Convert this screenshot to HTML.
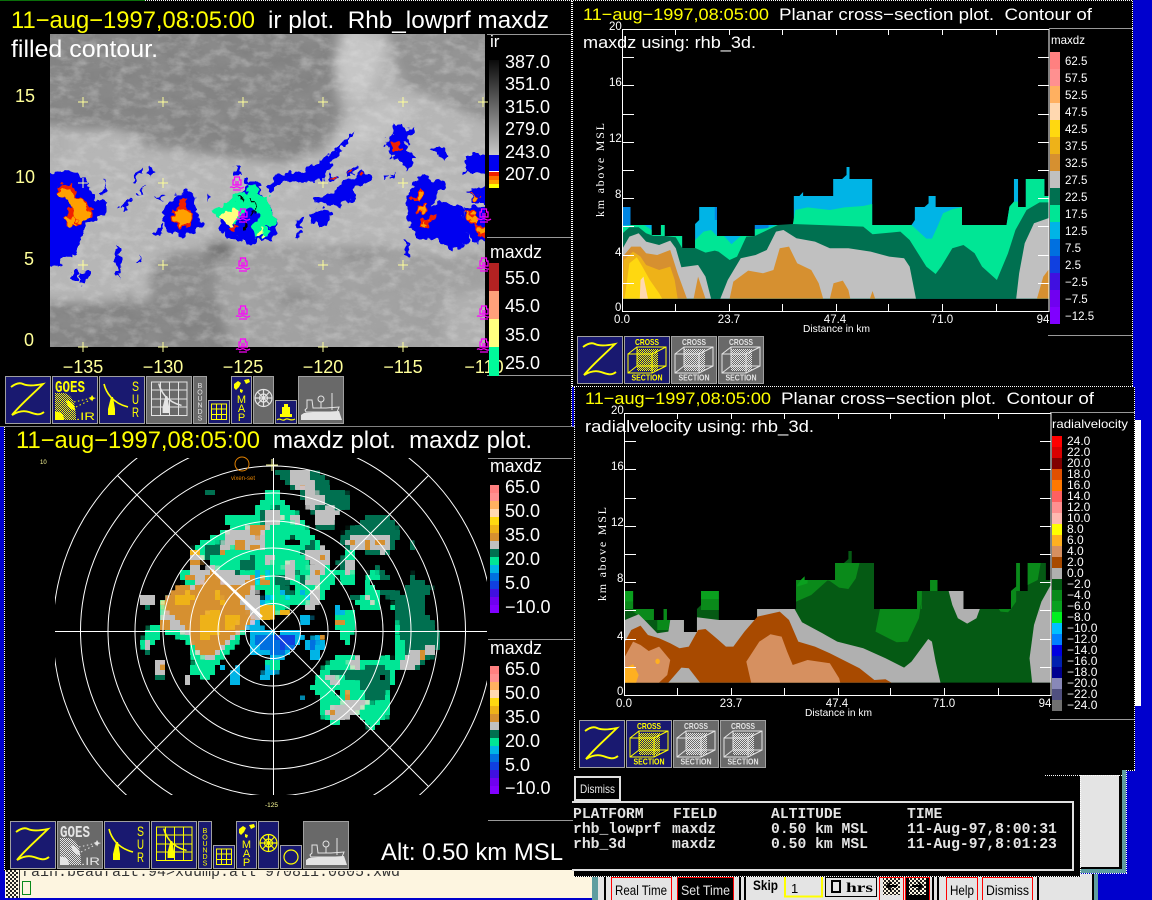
<!DOCTYPE html>
<html><head><meta charset="utf-8"><title>maxdz plots</title>
<style>
html,body{margin:0;padding:0;background:#0000cd;width:1152px;height:900px;overflow:hidden}
svg{display:block;font-family:"Liberation Sans",sans-serif}
.y{fill:#ffff00}.w{fill:#fff}.c{fill:#ffff99}
.m{font-family:"Liberation Mono",monospace;font-size:14.7px;fill:#e4e4e4;font-weight:bold}
</style></head><body>
<svg width="1152" height="900" viewBox="0 0 1152 900" xmlns="http://www.w3.org/2000/svg">
<defs>
<filter id="blur" filterUnits="userSpaceOnUse" x="0" y="0" width="560" height="400"><feGaussianBlur stdDeviation="5"/></filter>
<filter id="noise" x="0" y="0" width="100%" height="100%"><feTurbulence type="fractalNoise" baseFrequency="0.035 0.06" numOctaves="4" seed="7"/><feColorMatrix values="0 0 0 0 .45  0 0 0 0 .45  0 0 0 0 .45  1.6 0 0 0 -.35"/></filter>
<filter id="noise2" x="0" y="0" width="100%" height="100%"><feTurbulence type="fractalNoise" baseFrequency="0.07 0.12" numOctaves="4" seed="3"/><feColorMatrix values="0 0 0 0 .85  0 0 0 0 .85  0 0 0 0 .85  2.2 0 0 0 -.95"/></filter>
<filter id="rough" filterUnits="userSpaceOnUse" x="10" y="10" width="520" height="360" color-interpolation-filters="sRGB"><feTurbulence type="fractalNoise" baseFrequency="0.14" numOctaves="2" seed="5" result="t"/><feDisplacementMap in="SourceGraphic" in2="t" scale="12" xChannelSelector="R" yChannelSelector="G"/></filter>
<filter id="pix" filterUnits="userSpaceOnUse" primitiveUnits="userSpaceOnUse" x="100" y="450" width="400" height="340" color-interpolation-filters="sRGB">
<feFlood x="102" y="452" width="1" height="1" flood-color="#000"/>
<feComposite x="100" y="450" width="5" height="5"/>
<feTile result="a"/>
<feComposite in="SourceGraphic" in2="a" operator="in"/>
<feMorphology operator="dilate" radius="2"/>
</filter>
<clipPath id="irc"><rect x="50" y="34" width="435" height="313"/></clipPath>
<clipPath id="pc"><rect x="55" y="458" width="432" height="337"/></clipPath>
<clipPath id="tc"><rect x="5" y="871" width="590" height="27"/></clipPath>
<pattern id="ckW" width="2" height="2" patternUnits="userSpaceOnUse"><rect width="1" height="1" fill="#fff"/><rect x="1" y="1" width="1" height="1" fill="#fff"/></pattern>
<pattern id="ckD" width="4" height="4" patternUnits="userSpaceOnUse"><rect width="4" height="4" fill="#fdf5e0"/><rect width="2" height="2" fill="#222"/><rect x="2" y="2" width="2" height="2" fill="#222"/></pattern>
<mask id="ckm" maskUnits="userSpaceOnUse" x="0" y="0" width="50" height="50"><rect width="50" height="50" fill="url(#ckW)"/></mask>
<linearGradient id="gr" x1="0" y1="0" x2="0" y2="1"><stop offset="0" stop-color="#0a0a0a"/><stop offset="1" stop-color="#c8c8c8"/></linearGradient>

<g id="bar16" shape-rendering="crispEdges">
<rect y="0" width="1" height="1" fill="#ff8080"/><rect y="1" width="1" height="1" fill="#ff9090"/><rect y="2" width="1" height="1" fill="#ffb060"/><rect y="3" width="1" height="1" fill="#ffd8b0"/><rect y="4" width="1" height="1" fill="#ffd810"/><rect y="5" width="1" height="1" fill="#eeb218"/><rect y="6" width="1" height="1" fill="#d69030"/><rect y="7" width="1" height="1" fill="#c0c0c0"/><rect y="8" width="1" height="1" fill="#007050"/><rect y="9" width="1" height="1" fill="#00e695"/><rect y="10" width="1" height="1" fill="#00b4e6"/><rect y="11" width="1" height="1" fill="#0070e0"/><rect y="12" width="1" height="1" fill="#1040e0"/><rect y="13" width="1" height="1" fill="#4010e0"/><rect y="14" width="1" height="1" fill="#7000f0"/><rect y="15" width="1" height="1" fill="#8000ff"/>
</g>
<g id="mb" fill="none" stroke="#ff00ff" stroke-width="1.200"><path d="M-2.500-7h5v3h1.500v5h-8v-5h1.500zM-1-3v4M1-3v4"/><path d="M-7 3.500c2-2 3 1 4.500 0s3-1 4.500 0 3 1 5-.5"/><path d="M-4 6h8"/></g>

<g id="z"><path d="M6 11C10 8 14 6 18 8S28 10 38 8C28 18 16 28 7 39C12 36 18 34 24 36S34 40 39 36" fill="none" stroke="currentColor" stroke-width="1.900"/></g>
<g id="goes" fill="currentColor">
<text x="3" y="16" font-size="17" font-weight="bold" textLength="30" lengthAdjust="spacingAndGlyphs" font-family="Liberation Mono">GOES</text>
<path d="M3 17H12C20 19 24 26 24 44H3Z" mask="url(#ckm)"/>
<path d="M3 36C8 35 12 38 12 44H3ZM14 24C18 25 23 28 23 34C19 34 15 31 14 24Z"/>
<path d="M22 26L40 22M24 31L40 23" fill="none" stroke="currentColor" stroke-width="1" stroke-dasharray="1.500 2.500"/>
<path d="M40 19l1.500 2.500 2.500 .5-2.500 1-1.500 2.500-1-2.500-2.500-1 2.500-1Z"/>
<text x="24" y="44" font-size="11" textLength="19" lengthAdjust="spacingAndGlyphs">.IR</text>
</g>
<g id="radar"><path d="M5 8C7 16 13 27 29 31" fill="none" stroke="currentColor" stroke-width="1.600"/><path d="M12 21H14L16 33V39H9V33Z" fill="currentColor"/></g>
<g id="sur" fill="currentColor"><use href="#radar"/>
<text x="33" y="15" font-size="14" textLength="7" lengthAdjust="spacingAndGlyphs">S</text><text x="33" y="28" font-size="14" textLength="7" lengthAdjust="spacingAndGlyphs">U</text><text x="33" y="41" font-size="14" textLength="7" lengthAdjust="spacingAndGlyphs">R</text></g>
<g id="gsur"><path d="M5.500 6H41V39.500H5.500ZM14.500 6V39.500M23.500 6V39.500M32.500 6V39.500M5.500 14H41M5.500 23H41M5.500 31H41" fill="none" stroke="currentColor" stroke-width="1"/><g transform="translate(8,0) scale(.95)"><use href="#radar"/></g></g>
<g id="bounds" fill="currentColor" font-size="7" text-anchor="middle"><text x="7" y="12">B</text><text x="7" y="18.500">O</text><text x="7" y="25">U</text><text x="7" y="31.500">N</text><text x="7" y="38">D</text><text x="7" y="44.500">S</text></g>
<g id="sgrid"><path d="M3.500 4H18.500V19.500H3.500ZM8.500 4V19.500M13.500 4V19.500M3.500 9H18.500M3.500 14.500H18.500" fill="none" stroke="currentColor" stroke-width="1"/></g>
<g id="map" fill="currentColor"><path d="M3 8L7 5L10 7L8 11L5 14L3 12ZM13 4L18 3L19 6L15 8ZM9 13L12 14L11 17L9 16Z"/><text x="10.500" y="27" font-size="11" text-anchor="middle">M</text><text x="10.500" y="36" font-size="11" text-anchor="middle">A</text><text x="10.500" y="45" font-size="11" text-anchor="middle">P</text></g>
<g id="wheel" fill="none" stroke="currentColor" stroke-width="1.200"><circle cx="10.500" cy="22" r="8.500"/><circle cx="10.500" cy="22" r="4"/><path d="M10.500 13V31M2 22H19M4.500 16L16.500 28M16.500 16L4.500 28"/></g>
<g id="buoy"><path d="M9 4H13V7H15V14H17V17H5V14H7V7H9Z" fill="currentColor"/><path d="M2 20C5 17 7 22 10 19.500C13 17 15 22 20 19" fill="none" stroke="currentColor" stroke-width="1.200"/></g>
<g id="circ"><circle cx="11" cy="12" r="7" fill="none" stroke="currentColor" stroke-width="1.200"/></g>
<g id="ship" fill="currentColor"><path d="M3 44V39L6 37L41 35L44 44Z"/><path d="M7 34L8 36H39L41 31L28 32H15L14 24H9V32Z" fill="none" stroke="currentColor" stroke-width="1"/><circle cx="23" cy="23" r="3" fill="none" stroke="currentColor" stroke-width="1"/><path d="M23 26V32M34 17V34" fill="none" stroke="currentColor" stroke-width="1"/></g>
<g id="cross"><text x="23" y="9" font-size="8.500" text-anchor="middle" font-weight="bold" fill="currentColor" textLength="24" lengthAdjust="spacingAndGlyphs">CROSS</text>
<text x="23" y="44.500" font-size="8.500" text-anchor="middle" font-weight="bold" fill="currentColor" textLength="31" lengthAdjust="spacingAndGlyphs">SECTION</text>
<rect x="13" y="13" width="21" height="22" fill="currentColor" mask="url(#ckm)"/>
<path d="M4 18H28V37H4ZM13 11H42V30H13ZM4 18L13 11M28 18L42 11M28 37L42 30M4 37L13 30M13 11V30M28 18V37" fill="none" stroke="currentColor" stroke-width="1"/></g>
</defs>

<!-- base -->
<rect width="1152" height="900" fill="#0000cd"/>
<rect x="0" y="0" width="572" height="427" fill="#000"/>
<rect x="4" y="427" width="570" height="444" fill="#000"/>
<rect x="572" y="0" width="561" height="387" fill="#000"/>
<rect x="574" y="387" width="561" height="384" fill="#000"/>
<rect x="1135" y="420" width="6" height="286" fill="#fff"/>
<path d="M0 .5H145" stroke="#0a6e0a" stroke-width="1"/>
<path d="M145 .5H1133" stroke="#fff" stroke-dasharray="1 1" stroke-width="1"/>

<!-- IR PANEL -->
<g clip-path="url(#irc)">
<rect x="50" y="34" width="435" height="313" fill="#8a8a8a"/>
<g filter="url(#blur)"><g transform="translate(50,34) scale(.3333)">
<path d="M-50 -50H850V280L830 340L700 380L500 350L400 345L300 340L200 280L-50 270Z" fill="#828282"/>
<path d="M-50 270L100 290L200 285L290 340L400 350L520 370L700 385L830 340L880 250L850 100L880 -50H1000L1050 150L1150 190L1350 280V640L1200 680L1000 640L700 640L560 640L350 660L200 800L-50 810Z" fill="#b6b6b6"/>
<path d="M1000 -50H1350V270L1150 180L1050 140Z" fill="#909090"/>
<path d="M860 80L900 -20L1000 30L980 120L930 220L880 150Z" fill="#c8c8c8"/>
<path d="M830 330L900 250L1000 200L1100 210L1060 280L980 320L900 370Z" fill="#c2c2c2"/>
<path d="M500 650L1000 650L1200 690L1350 650V990H500Z" fill="#a0a0a0"/>
<path d="M-50 800L200 810L500 780L560 990H-50Z" fill="#828282"/>
<path d="M1180 800L1350 750V990H1190Z" fill="#b0b0b0"/>
<ellipse cx="510" cy="645" rx="45" ry="25" fill="#6c6c6c"/><ellipse cx="740" cy="790" rx="60" ry="25" fill="#8c8c8c"/><ellipse cx="920" cy="660" rx="50" ry="20" fill="#8e8e8e"/>
<path d="M210 290L270 300L300 360L260 350ZM-50 280L50 285L60 370H-50Z" fill="#b0b0b0"/>
<path d="M230 640H300V800L240 800Z" fill="#b8b8b8"/>
</g></g>
<rect x="50" y="34" width="435" height="313" filter="url(#noise)" opacity=".2"/>
<rect x="50" y="34" width="435" height="313" filter="url(#noise2)" opacity=".3"/>
<g filter="url(#rough)"><g transform="translate(50,34) scale(.3333)">
<g fill="#0000f0">
<path d="M-60 430L50 410L110 430L130 490L170 510L165 545L105 575L100 610L75 650L70 670L40 670L30 700H-60Z"/>
<path d="M60 715L85 710L85 740L60 738ZM90 715L120 710L105 750L90 745ZM210 520L240 490L250 490L225 525L215 530ZM240 440L275 405L280 420L245 445ZM150 480L165 440L170 470L160 490ZM290 420L300 395L315 410L300 430ZM260 480L290 450L275 480ZM198 630L215 640L210 740L200 700ZM258 690L270 665L272 680L262 695Z"/>
<path d="M340 530L370 490L405 470L435 480L440 530L452 570L435 595L400 608L360 595L335 560ZM315 490L345 483L335 500ZM315 600L335 575L340 600L330 612ZM470 480L482 490L475 505Z"/>
<path d="M505 575L520 540L560 490L610 440L630 470L650 500L680 550L672 625L640 615L600 635L560 610L520 605L505 590ZM585 435L620 435L635 460L600 470Z"/>
<path d="M650 470L680 420L750 415L790 395L830 370L860 340L890 310L860 370L830 405L820 440L760 445L690 445L660 480ZM875 330L910 285L890 330Z"/>
<path d="M790 495L860 470L880 440L920 430L935 410L970 430L955 445L920 455L915 490L870 515L800 510ZM785 540L820 520L846 540L835 570L805 578L785 560ZM838 418L860 425V440H840ZM890 405L915 395V420H895Z"/>
<path d="M740 560L758 555L755 585L742 580ZM738 595L748 590V618L738 612ZM990 420H1015L1005 435ZM1020 418L1040 420L1025 435ZM1065 625L1075 620L1078 660L1065 665ZM550 400H570L565 420Z"/>
<path d="M1010 310L1030 300V265L1055 275L1060 285L1095 280L1070 320V350L1098 365L1070 415L1060 380L1020 365L1005 335ZM1135 345L1180 335L1195 360L1180 385L1160 355Z"/>
<path d="M1070 500L1090 450L1120 415L1145 440H1190L1165 490L1150 510L1215 505L1240 530L1260 620L1205 652L1180 640L1160 610H1105L1075 570Z"/>
<path d="M1240 520H1380V625H1270L1250 590ZM1245 370L1280 355L1380 375V420H1245ZM1255 470L1380 440V510H1270Z"/>
</g>
<g fill="#f02000">
<path d="M25 455L70 450L85 490L120 515L130 545L100 555L75 580L50 570V540L70 510L45 490L25 480Z"/>
<path d="M365 530L385 520L390 490L415 495L410 520L430 540L420 565L395 590L365 560Z"/>
<path d="M1015 325L1050 315L1055 350L1030 352Z"/>
<path d="M1085 495L1115 460L1122 485L1105 505ZM1100 515L1130 505L1125 535L1100 540ZM1110 560L1160 540L1135 585L1110 575ZM1240 535L1265 530L1285 555L1280 575L1265 570ZM1275 575L1380 565V610H1285ZM1258 470L1285 485L1275 505ZM845 425H858V437H845ZM897 405H907V415H897ZM935 418H945V424H935ZM535 585L555 565V590Z"/>
</g>
<g fill="#ffa000">
<path d="M30 465L60 460L70 480L85 495L100 510L120 530L110 555L80 562L70 525L50 490L30 485ZM50 555L75 550L78 575L60 580Z"/>
<path d="M370 530L400 525L425 535L415 560L395 580L375 560Z"/>
<path d="M1095 490L1115 470L1118 490L1100 500ZM1105 520L1130 510L1120 535L1105 535ZM1115 565L1135 560L1125 580ZM1245 535L1270 540L1285 565L1265 565ZM1280 580L1380 570V605L1290 600ZM1262 475L1285 490L1272 500Z"/>
</g>
<path d="M485 535L520 520L560 480L600 470L590 455L610 450L630 480L655 490L660 520L680 550L670 580L650 580L655 600L612 615L610 575L625 560L620 525L590 520L560 570L520 550Z" fill="#00fa9a"/>
<path d="M515 540L545 520L565 545L545 575L525 565Z" fill="#ffff80"/>
<path d="M560 490L590 500M600 490L620 520M575 560L590 575M620 525L612 545" stroke="#000" stroke-width="4" fill="none"/>
<circle cx="582" cy="575" r="6" fill="#000"/>
<path d="M620 590L640 580V605L620 610Z" fill="#ffff80"/>
</g></g>
</g>

<path d="M78 102h10M83 97v10M158 102h10M163 97v10M238 102h10M243 97v10M318 102h10M323 97v10M398 102h10M403 97v10M478 102h10M483 97v10M78 183h10M83 178v10M158 183h10M163 178v10M318 183h10M323 178v10M398 183h10M403 178v10M78 265h10M83 260v10M158 265h10M163 260v10M318 265h10M323 260v10M398 265h10M403 260v10M78 347h10M83 342v10M158 347h10M163 342v10M238 347h10M318 347h10M323 342v10M398 347h10M403 342v10" stroke="#ffff99" fill="none"/>
<use href="#mb" x="237" y="184"/><use href="#mb" x="243" y="216"/><use href="#mb" x="243" y="265"/><use href="#mb" x="243" y="313"/><use href="#mb" x="243" y="346"/><use href="#mb" x="484" y="216"/><use href="#mb" x="484" y="265"/><use href="#mb" x="484" y="313"/><use href="#mb" x="484" y="346"/>

<text x="11" y="28" font-size="24" class="y" textLength="244" lengthAdjust="spacingAndGlyphs">11−aug−1997,08:05:00</text>
<text x="268" y="28" font-size="24" class="w" textLength="281" lengthAdjust="spacingAndGlyphs" xml:space="preserve">ir plot.  Rhb_lowprf maxdz</text>
<text x="11" y="57" font-size="24" class="w" textLength="147" lengthAdjust="spacingAndGlyphs">filled contour.</text>
<g font-size="18" class="c">
<text x="15" y="102">15</text><text x="15" y="183">10</text><text x="24" y="265">5</text><text x="24" y="346">0</text>
<text x="83" y="373" text-anchor="middle">−135</text><text x="163" y="373" text-anchor="middle">−130</text><text x="243" y="373" text-anchor="middle">−125</text><text x="323" y="373" text-anchor="middle">−120</text><text x="403" y="373" text-anchor="middle">−115</text><text x="484" y="373" text-anchor="middle">−110</text>
</g>
<path d="M487 34.500H572M487 237.500H572M487 375.500H572" stroke="#999" fill="none"/>
<g shape-rendering="crispEdges">
<rect x="489" y="60" width="10" height="95" fill="url(#gr)"/>
<rect x="489" y="155" width="10" height="16" fill="#0000f0"/><rect x="489" y="171" width="10" height="1" fill="#fff"/><rect x="489" y="172" width="10" height="4" fill="#f02000"/><rect x="489" y="176" width="10" height="4" fill="#ff7000"/><rect x="489" y="180" width="10" height="4" fill="#ffa000"/><rect x="489" y="184" width="10" height="4" fill="#ffff00"/>
<rect x="489" y="263" width="10" height="28" fill="#b22222"/><rect x="489" y="291" width="10" height="28" fill="#ffa07a"/><rect x="489" y="319" width="10" height="28" fill="#ffff80"/><rect x="489" y="347" width="10" height="29" fill="#00fa9a"/>
</g>
<text x="490" y="47" font-size="17" class="w">ir</text>
<g font-size="18" class="w">
<text x="505" y="68">387.0</text><text x="505" y="90">351.0</text><text x="505" y="113">315.0</text><text x="505" y="135">279.0</text><text x="505" y="158">243.0</text><text x="505" y="180">207.0</text>
<text x="490" y="258" textLength="52" lengthAdjust="spacingAndGlyphs">maxdz</text>
<text x="505" y="284">55.0</text><text x="505" y="312">45.0</text><text x="505" y="341">35.0</text><text x="505" y="369">25.0</text>
</g>

<!-- icons panel 1 -->
<g>
<g transform="translate(5,376)"><rect x=".5" y=".5" width="45" height="47" fill="#191970" stroke="#a0a0a0"/><use href="#z" color="#ff0"/></g>
<g transform="translate(52,376)"><rect x=".5" y=".5" width="45" height="47" fill="#191970" stroke="#a0a0a0"/><use href="#goes" color="#ff0"/></g>
<g transform="translate(99,376)"><rect x=".5" y=".5" width="45" height="47" fill="#191970" stroke="#a0a0a0"/><use href="#sur" color="#ff0"/></g>
<g transform="translate(146,376)"><rect x=".5" y=".5" width="45" height="47" fill="#696969" stroke="#a0a0a0"/><use href="#gsur" color="#e4e4e4"/></g>
<g transform="translate(193,376)"><rect x=".5" y=".5" width="13" height="47" fill="#696969" stroke="#a0a0a0"/><use href="#bounds" color="#e4e4e4"/></g>
<g transform="translate(208,400)"><rect x=".5" y=".5" width="21" height="23" fill="#191970" stroke="#a0a0a0"/><use href="#sgrid" color="#ff0"/></g>
<g transform="translate(231,376)"><rect x=".5" y=".5" width="20" height="47" fill="#191970" stroke="#a0a0a0"/><use href="#map" color="#ff0"/></g>
<g transform="translate(253,376)"><rect x=".5" y=".5" width="20" height="47" fill="#696969" stroke="#a0a0a0"/><use href="#wheel" color="#e4e4e4"/></g>
<g transform="translate(275,400)"><rect x=".5" y=".5" width="21" height="23" fill="#191970" stroke="#a0a0a0"/><use href="#buoy" color="#ff0"/></g>
<g transform="translate(298,376)"><rect x=".5" y=".5" width="45" height="47" fill="#696969" stroke="#a0a0a0"/><use href="#ship" color="#e4e4e4"/></g>
</g>

<!-- POLAR PANEL -->
<path d="M.5 426.500H575" stroke="#fff" stroke-dasharray="1 1"/>
<path d="M571.500 1V426" stroke="#fff" stroke-dasharray="1 1"/>
<path d="M4.500 427V870" stroke="#fff" stroke-dasharray="1 1"/>
<text x="16" y="448" font-size="24" class="y" textLength="244" lengthAdjust="spacingAndGlyphs">11−aug−1997,08:05:00</text>
<text x="273" y="448" font-size="24" class="w" textLength="259" lengthAdjust="spacingAndGlyphs" xml:space="preserve">maxdz plot.  maxdz plot.</text>

<g filter="url(#pix)"><g transform="translate(140,470) scale(.3333)">
<g fill="#00e695">
<path d="M350 115L380 65H415L440 110L470 125L500 170L520 200L540 225L575 270L600 310L570 350L545 390L460 410L380 420L330 350L240 340L230 320L190 280L160 270L150 240L190 210L260 180L300 160L260 165L255 140L300 130L350 140Z"/>
<path d="M60 400L100 370L130 340L120 310L160 290L300 340L360 420L330 470L290 520L240 570L220 610L200 625L150 615L160 570L140 510L70 490L65 445Z"/>
<path d="M515 655L550 590L590 555L620 550L670 570L750 560L785 580L770 600L760 640L745 740L690 780L650 730L615 740L580 770L540 735V690Z"/>
<path d="M640 370L690 340L720 360V420H660L645 395ZM755 400L800 380L820 420L790 470L770 490ZM770 490H800L810 560L770 600ZM820 480H890V520L850 530L815 520ZM685 295L755 320L750 335L690 330L700 380L680 350ZM620 235L650 250L640 290V340L610 350L600 300ZM30 460H60L65 490L40 520L20 545L5 530V510ZM45 595H75V625H45ZM580 430L640 420V480L625 520L600 510L590 470Z"/>
</g>
<g fill="#007050">
<path d="M400 0H450L560 10L565 60L635 70V110L600 120L575 180H535L520 130L495 100L460 60L420 20Z"/>
<path d="M355 120L375 115L415 110L420 145L380 175L360 150ZM190 60H220V80H190ZM640 50H650V70H640Z"/>
<path d="M610 175L660 170L665 150L690 130L745 140L778 180L770 220L750 250H690L640 240L605 230Z"/>
<path d="M810 205L830 240L815 245ZM710 290L750 320L740 335L715 330Z"/>
<path d="M820 305L830 325L880 355V360L850 380V420L895 480V530L880 560L820 605L770 600L800 550L780 490L770 450V400L725 370L730 360L790 370L810 330Z"/>
<path d="M570 600L640 600L720 580L750 610L740 690L700 700L680 690L660 640L610 620L575 620Z"/>
<path d="M200 230L250 210L240 250L190 270ZM300 270L340 260L350 300L310 310ZM270 300L300 300L290 320Z"/>
<path d="M480 250L520 210L530 240L510 280ZM590 280L620 250L610 300ZM620 370H655V395H630ZM400 300L460 340L470 380L420 370ZM470 300L500 330L480 350Z"/>
<path d="M0 400H50L20 415ZM10 535H40L30 550H15ZM45 610H75V625H45ZM70 370H85V395H70Z"/>
</g>
<g fill="#c0c0c0">
<path d="M450 0H500L520 40L535 75H560V90L520 120L575 110L595 130L570 170H530L525 130L500 110V70L450 40Z"/>
<path d="M380 115H420L430 150L380 175ZM440 130H470L490 165L450 155Z"/>
<path d="M250 190L330 170H370V235L330 240L280 230L240 250L250 210ZM150 240H180L190 270L180 320H150Z"/>
<path d="M70 400L100 370L160 340L185 295L220 290L330 320L345 340L380 420L340 460L290 500L240 550L220 570L180 560L160 530L140 490L80 480L65 470Z"/>
<path d="M610 215L640 195H745L752 225L730 250L690 235L640 240Z"/>
<path d="M770 590L800 550L890 520V545L860 560L820 600Z"/>
<path d="M500 240L560 230L570 270L540 330V350L500 345L505 310ZM425 280L460 275L470 320L440 330ZM620 270L645 265V305L620 310ZM510 360L540 350L530 420L500 415Z"/>
<path d="M560 720L600 700L640 690H690L640 740L580 750L555 735ZM555 610H590L595 640H565ZM620 570L660 560V600L630 590ZM0 370H45V400H0ZM10 510H35V535H10ZM45 575H75V610H45ZM130 618H152V640H130ZM370 260L400 255L395 290L375 290ZM395 115H420V150H395ZM680 380L700 390L695 410Z"/>
</g>
<g fill="#d69030">
<path d="M65 400L95 370L120 345L165 355L185 340L215 300L250 340L300 350L345 310L340 350L300 400L345 450L320 470L290 490L240 525L225 560L180 550L150 510L145 480L100 440L70 420Z"/>
<path d="M330 160L370 165L365 205L330 200ZM280 205H320V235H280ZM150 265H190V290H150ZM140 315H165V335H140ZM330 225H355V240H330ZM245 245H255V260H245ZM540 255H560V270H540ZM525 300H540V315H525ZM670 215H692V237H670ZM630 205H650V220H630ZM710 212H735V227H710ZM545 130H560V140H545ZM485 40H495V52H485ZM360 320L385 325V340H360ZM590 445H610V460H590ZM540 490L555 495L545 505ZM65 578H77V595H65ZM65 455H90V475H65ZM835 543H860V565H835ZM570 720H590V740H570ZM610 655L625 668L637 695H610Z"/>
</g>
<g fill="#eeb218">
<path d="M100 375L150 365V410L100 405ZM190 430L240 420L245 490L185 510L180 460ZM240 350L250 400L220 390ZM155 370H170V390H155ZM250 440L300 430L290 470L255 480ZM150 240H180V260H150Z"/>
<path d="M360 410L400 405L435 405L450 445L425 430L400 440L385 455L365 445Z"/>
</g>
<path d="M320 470L350 450L360 470L410 490L470 475L490 500L450 550L430 555L420 600L380 635L360 630L375 590L385 560L340 550L320 540L340 510Z" fill="#00b4e6"/>
<path d="M490 510L530 500L560 520L530 575L510 560ZM480 440L510 430L520 450L490 465ZM570 400L600 400L610 430L585 440ZM265 620L295 590L300 640L275 650ZM240 590H260V605H240ZM480 683H490V690H480ZM380 290L395 340L385 345ZM420 350L445 385L430 385ZM470 360L510 372L505 385ZM345 300L360 300L350 350L340 340ZM360 380L400 370L395 395L365 400Z" fill="#00b4e6"/>
<path d="M380 490H430L420 525L400 540L370 520ZM380 570H420L415 600H385ZM400 400L440 395L430 425L405 430Z" fill="#00e695"/>
<path d="M350 490L420 500H470V530L420 555L390 550L350 530ZM505 515L535 510L525 550Z" fill="#0070e0"/>
<path d="M410 500L470 495L465 520L420 540Z" fill="#1040e0"/>
<path d="M185 270L210 275L220 290L190 295ZM500 265L520 280L505 290ZM570 270L590 280L575 300ZM605 650L600 690L580 670ZM720 610H735V630H720ZM745 650L775 640L760 690L745 680ZM430 205L470 200L480 225L440 230ZM640 360L670 340L680 380L650 380ZM420 20L440 50L420 50ZM470 60L490 90L470 90ZM520 190L540 180L540 205ZM560 370L590 390L580 430L560 420ZM440 350L470 340L460 370ZM340 370L380 360L370 385Z" fill="#000"/>
</g></g>

<g clip-path="url(#pc)" fill="none" stroke="#fff" stroke-width="1">
<circle cx="273" cy="631" r="27.500"/><circle cx="273" cy="631" r="55"/><circle cx="273" cy="631" r="83"/><circle cx="273" cy="631" r="110"/><circle cx="273" cy="631" r="138"/><circle cx="273" cy="631" r="165"/><circle cx="273" cy="631" r="192.500"/><circle cx="273" cy="631" r="220"/>
</g>
<path d="M55 631.500H487M273.500 458V795M117.500 475.500L428.500 786.500M428.500 475.500L117.500 786.500" stroke="#fff" stroke-width="1" fill="none"/>
<path d="M212 570L262 617" stroke="#fff" stroke-width="2.500"/>
<path d="M266 465H278M272 459V471" stroke="#ffffa0"/>
<circle cx="242" cy="464" r="7" fill="none" stroke="#e08000"/>
<text x="231" y="480" font-size="6" fill="#e08000" textLength="24" lengthAdjust="spacingAndGlyphs">vixen-set</text>
<text x="40" y="464" font-size="6" class="c">10</text>
<text x="265" y="807" font-size="6.500" class="c">-125</text>

<use href="#bar16" transform="translate(490,485) scale(9,8)"/>
<use href="#bar16" transform="translate(490,666) scale(9,8)"/>
<path d="M488 458.500H572M488 639.500H573M488 820.500H573" stroke="#999" fill="none"/>
<g font-size="18" class="w">
<text x="490" y="472" textLength="52" lengthAdjust="spacingAndGlyphs">maxdz</text>
<text x="505" y="493">65.0</text><text x="505" y="517">50.0</text><text x="505" y="541">35.0</text><text x="505" y="565">20.0</text><text x="505" y="589">5.0</text><text x="505" y="613">−10.0</text>
<text x="490" y="654" textLength="52" lengthAdjust="spacingAndGlyphs">maxdz</text>
<text x="505" y="675">65.0</text><text x="505" y="699">50.0</text><text x="505" y="723">35.0</text><text x="505" y="747">20.0</text><text x="505" y="771">5.0</text><text x="505" y="794">−10.0</text>
</g>
<text x="381" y="860" font-size="24" class="w" textLength="182" lengthAdjust="spacingAndGlyphs">Alt: 0.50 km MSL</text>

<!-- icons panel 2 -->
<g>
<g transform="translate(10,821)"><rect x=".5" y=".5" width="45" height="47" fill="#191970" stroke="#a0a0a0"/><use href="#z" color="#ff0"/></g>
<g transform="translate(57,821)"><rect x=".5" y=".5" width="45" height="47" fill="#696969" stroke="#a0a0a0"/><use href="#goes" color="#e4e4e4"/></g>
<g transform="translate(104,821)"><rect x=".5" y=".5" width="45" height="47" fill="#191970" stroke="#a0a0a0"/><use href="#sur" color="#ff0"/></g>
<g transform="translate(151,821)"><rect x=".5" y=".5" width="45" height="47" fill="#191970" stroke="#a0a0a0"/><use href="#gsur" color="#ff0"/></g>
<g transform="translate(198,821)"><rect x=".5" y=".5" width="13" height="47" fill="#191970" stroke="#a0a0a0"/><use href="#bounds" color="#ff0"/></g>
<g transform="translate(213,845)"><rect x=".5" y=".5" width="21" height="23" fill="#191970" stroke="#a0a0a0"/><use href="#sgrid" color="#ff0"/></g>
<g transform="translate(236,821)"><rect x=".5" y=".5" width="20" height="47" fill="#191970" stroke="#a0a0a0"/><use href="#map" color="#ff0"/></g>
<g transform="translate(258,821)"><rect x=".5" y=".5" width="20" height="47" fill="#191970" stroke="#a0a0a0"/><use href="#wheel" color="#ff0"/></g>
<g transform="translate(280,845)"><rect x=".5" y=".5" width="21" height="23" fill="#191970" stroke="#a0a0a0"/><use href="#circ" color="#ff0"/></g>
<g transform="translate(303,821)"><rect x=".5" y=".5" width="45" height="47" fill="#696969" stroke="#a0a0a0"/><use href="#ship" color="#e4e4e4"/></g>
</g>

<!-- TERMINAL -->
<rect x="5" y="870" width="587" height="28" fill="#fdf5e0"/>
<rect x="6" y="870" width="12" height="28" fill="url(#ckD)"/>
<rect x="19" y="870" width="1" height="28" fill="#333"/>
<g clip-path="url(#tc)"><text x="22" y="876" font-family="Liberation Mono" font-size="15" fill="#333" textLength="378" lengthAdjust="spacingAndGlyphs">rain:beaufait:94&gt;xdump.all 970811.0805.xwd</text></g>
<rect x="22.500" y="881.500" width="8" height="13" fill="none" stroke="#0a8a1a"/>
<rect x="0" y="898" width="592" height="2" fill="#0000cd"/>

<!-- CROSS SECTION 1 -->
<g transform="translate(570,0) scale(.3712,.3333)">
<path d="M142 896V621H163V675H220V705H245V675H255V708H302V744H337V672L348 660V621H396V708H498V675H603V588H618L628 576V588H709V537H733L745 525V501H753V537H814V675H920L929 660V621H955L966 610V588H985V621H1056V675H1176L1184 620L1196 605V537H1207V621H1228V537H1278V588H1290V896Z" fill="#00b4e6"/>
<path d="M142 621H163V675H142ZM390 621H396V660H390ZM498 675H535V688H498Z" fill="#0070e0" opacity=".7"/>
<path d="M142 896V680L163 675H200L220 690V705H245V675H255V708H302V744H337V720L360 695L380 690L396 708H415L435 733L460 708H498V688L530 685L555 675H600L607 630L640 622L700 630L740 622L790 618L814 612V675H920L960 716H975L990 680L1005 640L1030 628L1056 621V675H1176L1184 620L1196 605H1207V621H1228V537H1278V588H1290V896Z" fill="#00e695"/>
<path d="M142 896V700L160 682H185L205 700L225 708H255L285 712L302 744H337L365 758L390 752L400 755L430 780L450 770L475 710L498 708L560 675L600 672L790 680L815 703L890 695L915 720L960 800L985 822L1000 800L1030 745L1060 735L1090 760L1110 800L1150 840L1180 760L1200 690L1230 630L1265 607H1290V896Z" fill="#007050"/>
<path d="M142 896V745L160 710L185 700L205 725L240 735L270 722L285 745L300 802L345 795L365 830L380 896H405L425 840L460 775L500 765L530 750L555 695L575 690L610 715L660 725L700 745H750L810 755L860 770L900 775L915 800L932 896H1202L1210 820L1225 730L1250 670L1290 654V896Z" fill="#c0c0c0"/>
<path d="M142 896V770L165 740H190L205 760L235 765L270 750L290 820L315 896ZM333 896L345 830L365 896ZM430 896L440 845L480 812L520 820L548 810L565 745L590 740L612 790L650 810L670 850L682 896ZM700 896L710 850L735 842L750 870L755 896ZM808 896L815 873L822 896ZM1258 896L1275 830L1290 808V896Z" fill="#d69030"/>
<path d="M142 896L145 780L170 755L190 770L205 795L240 810L270 800L282 840L290 896Z" fill="#eeb218"/>
<path d="M147 896L160 790L180 772L195 800L215 840L240 880L248 896Z" fill="#ffd810"/>
<path d="M188 896L190 840L198 830L210 896Z" fill="#ffd8b0"/>
</g>
<g fill="none" stroke="#fff" stroke-width="1">
<rect x="622.500" y="29.500" width="426.500" height="282"/>
<path d="M623 57.500h11M623 85.500h11M623 114.500h11M623 142.500h11M623 170.500h11M623 198.500h11M623 226.500h11M623 255.500h11M623 283.500h11M1049 57.500h-11M1049 85.500h-11M1049 114.500h-11M1049 142.500h-11M1049 170.500h-11M1049 198.500h-11M1049 226.500h-11M1049 255.500h-11M1049 283.500h-11M675.500 29v6M729.500 29v6M782.500 29v6M836.500 29v6M888.500 29v6M942.500 29v6M996.500 29v6M675.500 311v-7M729.500 311v-7M782.500 311v-7M836.500 311v-7M888.500 311v-7M942.500 311v-7M996.500 311v-7"/>
</g>
<text x="583" y="20" font-size="17" class="y" textLength="186" lengthAdjust="spacingAndGlyphs">11−aug−1997,08:05:00</text>
<text x="779" y="20" font-size="17" class="w" textLength="313" lengthAdjust="spacingAndGlyphs" xml:space="preserve">Planar cross−section plot.  Contour of</text>
<text x="583" y="48" font-size="17" class="w" textLength="173" lengthAdjust="spacingAndGlyphs">maxdz using: rhb_3d.</text>
<g font-size="11.500" class="w">
<text x="609" y="30">20</text><text x="609" y="86">16</text><text x="609" y="142">12</text><text x="615" y="198">8</text><text x="615" y="256">4</text><text x="615" y="311">0</text>
<text x="622" y="323" text-anchor="middle">0.0</text><text x="729" y="323" text-anchor="middle">23.7</text><text x="835" y="323" text-anchor="middle">47.4</text><text x="942" y="323" text-anchor="middle">71.0</text><text x="1043" y="323" text-anchor="middle">94</text>
<text x="803" y="332" font-size="10.500" textLength="67" lengthAdjust="spacingAndGlyphs">Distance in km</text>
</g>
<text transform="translate(604,217) rotate(-90)" font-family="Liberation Serif" font-size="12" class="w" textLength="94" lengthAdjust="spacing">km above MSL</text>
<use href="#bar16" transform="translate(1050,52) scale(10,17)"/>
<path d="M1049 28.500H1133M1048 335.500H1133" stroke="#999" fill="none"/>
<g font-size="11.500" class="w">
<text x="1051" y="44" textLength="34" lengthAdjust="spacingAndGlyphs" font-size="12">maxdz</text>
<text x="1065" y="65">62.5</text><text x="1065" y="82">57.5</text><text x="1065" y="99">52.5</text><text x="1065" y="116">47.5</text><text x="1065" y="133">42.5</text><text x="1065" y="150">37.5</text><text x="1065" y="167">32.5</text><text x="1065" y="184">27.5</text><text x="1065" y="201">22.5</text><text x="1065" y="218">17.5</text><text x="1065" y="235">12.5</text><text x="1065" y="252">7.5</text><text x="1065" y="269">2.5</text><text x="1065" y="286">−2.5</text><text x="1065" y="303">−7.5</text><text x="1065" y="320">−12.5</text>
</g>
<g transform="translate(577,336)"><rect x=".5" y=".5" width="45" height="47" fill="#191970" stroke="#a0a0a0"/><use href="#z" color="#ff0"/></g>
<g transform="translate(624,336)"><rect x=".5" y=".5" width="45" height="47" fill="#191970" stroke="#a0a0a0"/><use href="#cross" color="#ff0"/></g>
<g transform="translate(671,336)"><rect x=".5" y=".5" width="45" height="47" fill="#696969" stroke="#a0a0a0"/><use href="#cross" color="#e4e4e4"/></g>
<g transform="translate(718,336)"><rect x=".5" y=".5" width="45" height="47" fill="#696969" stroke="#a0a0a0"/><use href="#cross" color="#e4e4e4"/></g>
<path d="M572.500 1V386M572 386.500H1133M1132.500 1V386" stroke="#fff" stroke-dasharray="1 1" fill="none"/>

<!-- CROSS SECTION 2 -->
<g transform="translate(570,385) scale(.3712,.3333)">
<path d="M148 893V618H170V672H226V705H252V672H261V705H307V741H342V672L353 660V618H401V705H504V672H609V585H622L632 574V585H714V534H738L750 522V498H759V534H819V672H935V618H970V585H990V618H1060V672H1188V618L1202 605V534H1212V618H1233V534H1282V585H1295V893Z" fill="#055a14"/>
<g fill="#0a8a1a">
<path d="M148 650H170V672H148ZM353 642H401V675H353ZM609 650V585H695L680 600L650 630ZM690 585H714V534H780L770 580L750 612L725 608L700 588ZM835 672H945L948 640L940 700L910 770L880 772L823 740ZM935 618H948V672H935ZM1202 534H1212V618H1202ZM1233 534H1268L1260 585L1233 600ZM1188 618L1202 605V650L1188 672ZM170 672H226V705H200L170 680ZM252 672H261V705H235V735H265L270 705H252ZM1155 672H1188L1180 682L1160 680ZM970 585H990V618H970Z"/>
</g>
<path d="M148 618H170V650H148ZM353 618H401V642H353ZM612 600L622 585L632 574V585L640 585V595L612 605Z" fill="#0aa01e"/>
<g fill="#b0b0b0">
<path d="M148 893V705L185 688L205 710L235 745L265 740L270 705H307V741H342V697L401 705H504V672H605L625 712L680 745L720 770L790 790L850 820L900 848L920 830L965 762L975 770L985 830L998 893Z"/>
<path d="M1020 618H1060V672H1104L1095 700L1070 716L1045 700L1030 660Z"/>
<path d="M1295 600L1270 650L1250 720L1238 820L1245 893H1295Z"/>
</g>
<path d="M148 893V770L165 735L190 722L210 750L240 760L270 775L295 790L320 785L345 735L365 732L400 765L420 785H440L470 740L505 695L565 680L590 705L615 770L660 785L700 805L780 850L820 885L850 883L866 893Z" fill="#a84a00"/>
<path d="M265 893L300 848L320 850L350 893Z" fill="#b0b0b0"/>
<path d="M148 893V815L170 770L190 780L212 798L240 785L270 825L262 870L240 893ZM488 893L475 830L510 770L540 748L570 755L585 800L600 840L640 825L700 835L725 880L728 893Z" fill="#d69060"/>
<path d="M148 893V850L170 838L185 870L178 893Z" fill="#ffb020"/>
<ellipse cx="236" cy="829" rx="6" ry="8" fill="#ffb020"/>
</g>
<g fill="none" stroke="#fff" stroke-width="1" transform="translate(2,384)">
<rect x="622.500" y="29.500" width="426.500" height="282"/>
<path d="M623 57.500h11M623 85.500h11M623 114.500h11M623 142.500h11M623 170.500h11M623 198.500h11M623 226.500h11M623 255.500h11M623 283.500h11M1049 57.500h-11M1049 85.500h-11M1049 114.500h-11M1049 142.500h-11M1049 170.500h-11M1049 198.500h-11M1049 226.500h-11M1049 255.500h-11M1049 283.500h-11M675.500 29v6M729.500 29v6M782.500 29v6M836.500 29v6M888.500 29v6M942.500 29v6M996.500 29v6M675.500 311v-7M729.500 311v-7M782.500 311v-7M836.500 311v-7M888.500 311v-7M942.500 311v-7M996.500 311v-7"/>
</g>
<text x="585" y="404" font-size="17" class="y" textLength="186" lengthAdjust="spacingAndGlyphs">11−aug−1997,08:05:00</text>
<text x="781" y="404" font-size="17" class="w" textLength="313" lengthAdjust="spacingAndGlyphs" xml:space="preserve">Planar cross−section plot.  Contour of</text>
<text x="585" y="432" font-size="17" class="w" textLength="229" lengthAdjust="spacingAndGlyphs">radialvelocity using: rhb_3d.</text>
<g font-size="11.500" class="w" transform="translate(2,384)">
<text x="609" y="30">20</text><text x="609" y="86">16</text><text x="609" y="142">12</text><text x="615" y="198">8</text><text x="615" y="256">4</text><text x="615" y="311">0</text>
<text x="622" y="323" text-anchor="middle">0.0</text><text x="729" y="323" text-anchor="middle">23.7</text><text x="835" y="323" text-anchor="middle">47.4</text><text x="942" y="323" text-anchor="middle">71.0</text><text x="1043" y="323" text-anchor="middle">94</text>
<text x="803" y="332" font-size="10.500" textLength="67" lengthAdjust="spacingAndGlyphs">Distance in km</text>
</g>
<text transform="translate(606,601) rotate(-90)" font-family="Liberation Serif" font-size="12" class="w" textLength="94" lengthAdjust="spacing">km above MSL</text>
<g shape-rendering="crispEdges">
<rect x="1052" y="436" width="10" height="11" fill="#ff0000"/><rect x="1052" y="447" width="10" height="11" fill="#d80000"/><rect x="1052" y="458" width="10" height="11" fill="#800000"/><rect x="1052" y="469" width="10" height="11" fill="#e05000"/><rect x="1052" y="480" width="10" height="11" fill="#ff7800"/><rect x="1052" y="491" width="10" height="11" fill="#ff6060"/><rect x="1052" y="502" width="10" height="11" fill="#ff9090"/><rect x="1052" y="513" width="10" height="11" fill="#ffb8b0"/><rect x="1052" y="524" width="10" height="11" fill="#ffff00"/><rect x="1052" y="535" width="10" height="11" fill="#ffb020"/><rect x="1052" y="546" width="10" height="11" fill="#d69060"/><rect x="1052" y="557" width="10" height="11" fill="#a84a00"/><rect x="1052" y="568" width="10" height="11" fill="#b0b0b0"/><rect x="1052" y="579" width="10" height="11" fill="#055a14"/><rect x="1052" y="590" width="10" height="11" fill="#0a8a1a"/><rect x="1052" y="601" width="10" height="11" fill="#0aa020"/><rect x="1052" y="612" width="10" height="11" fill="#00f020"/><rect x="1052" y="623" width="10" height="11" fill="#00c0ff"/><rect x="1052" y="634" width="10" height="11" fill="#0080ff"/><rect x="1052" y="645" width="10" height="11" fill="#0000e0"/><rect x="1052" y="656" width="10" height="11" fill="#0020b0"/><rect x="1052" y="667" width="10" height="11" fill="#000090"/><rect x="1052" y="678" width="10" height="11" fill="#8888b8"/><rect x="1052" y="689" width="10" height="11" fill="#505080"/><rect x="1052" y="700" width="10" height="11" fill="#707070"/>
</g>
<path d="M1050 412.500H1135M1050 719.500H1135" stroke="#999" fill="none"/>
<g font-size="12" class="w">
<text x="1052" y="428" textLength="76" lengthAdjust="spacingAndGlyphs">radialvelocity</text>
<text x="1067" y="445">24.0</text><text x="1067" y="456">22.0</text><text x="1067" y="467">20.0</text><text x="1067" y="478">18.0</text><text x="1067" y="489">16.0</text><text x="1067" y="500">14.0</text><text x="1067" y="511">12.0</text><text x="1067" y="522">10.0</text><text x="1067" y="533">8.0</text><text x="1067" y="544">6.0</text><text x="1067" y="555">4.0</text><text x="1067" y="566">2.0</text><text x="1067" y="577">0.0</text><text x="1067" y="588">−2.0</text><text x="1067" y="599">−4.0</text><text x="1067" y="610">−6.0</text><text x="1067" y="621">−8.0</text><text x="1067" y="632">−10.0</text><text x="1067" y="643">−12.0</text><text x="1067" y="654">−14.0</text><text x="1067" y="665">−16.0</text><text x="1067" y="676">−18.0</text><text x="1067" y="687">−20.0</text><text x="1067" y="698">−22.0</text><text x="1067" y="709">−24.0</text>
</g>
<g transform="translate(579,720)"><rect x=".5" y=".5" width="45" height="47" fill="#191970" stroke="#a0a0a0"/><use href="#z" color="#ff0"/></g>
<g transform="translate(626,720)"><rect x=".5" y=".5" width="45" height="47" fill="#191970" stroke="#a0a0a0"/><use href="#cross" color="#ff0"/></g>
<g transform="translate(673,720)"><rect x=".5" y=".5" width="45" height="47" fill="#696969" stroke="#a0a0a0"/><use href="#cross" color="#e4e4e4"/></g>
<g transform="translate(720,720)"><rect x=".5" y=".5" width="45" height="47" fill="#696969" stroke="#a0a0a0"/><use href="#cross" color="#e4e4e4"/></g>
<path d="M574.500 387V770M574 770.500H1135M1134.500 387V770" stroke="#fff" stroke-dasharray="1 1" fill="none"/>

<!-- RIGHT GREY + BAR -->
<rect x="1045" y="770" width="77" height="5" fill="#000"/>
<rect x="1122" y="770" width="4" height="103" fill="#5f9ea0"/>
<rect x="1080" y="775" width="39" height="92" fill="#e4e4e4"/>
<rect x="1119" y="775" width="3" height="94" fill="#000"/>
<rect x="1080" y="867" width="42" height="2" fill="#000"/>
<rect x="1080" y="869" width="46" height="4" fill="#5f9ea0"/>
<path d="M1126.500 770V873M1080 873.500H1127" stroke="#fff" stroke-dasharray="1 1" fill="none"/>
<rect x="592" y="877" width="506" height="23" fill="#e4e4e4"/>
<rect x="1080" y="874" width="18" height="3" fill="#e4e4e4"/>
<rect x="592" y="877" width="6" height="23" fill="#5f9ea0"/>
<rect x="1092" y="874" width="2" height="26" fill="#000"/>
<rect x="1094" y="874" width="4" height="26" fill="#5f9ea0"/>
<path d="M605 877V900M740 877V900M745 877V900M933 877V900M938 877V900M1038 877V900" stroke="#000" stroke-width="2"/>
<rect x="611.500" y="877.500" width="60" height="24" fill="#e4e4e4" stroke="#f00"/>
<text x="615" y="895" font-size="14" fill="#000" textLength="52" lengthAdjust="spacingAndGlyphs">Real Time</text>
<rect x="677.500" y="877.500" width="56" height="24" fill="#000" stroke="#f00"/>
<text x="681" y="895" font-size="14" fill="#e4e4e4" textLength="49" lengthAdjust="spacingAndGlyphs">Set Time</text>
<text x="753" y="890" font-size="14" font-weight="bold" fill="#000" textLength="25" lengthAdjust="spacingAndGlyphs">Skip</text>
<path d="M785 877V896.500H822V877" fill="none" stroke="#ff0" stroke-width="2"/>
<text x="791" y="893" font-size="13" fill="#000">1</text>
<rect x="825.500" y="877.500" width="51" height="19" fill="#e4e4e4" stroke="#000"/>
<rect x="832" y="881" width="8" height="11" fill="none" stroke="#000" stroke-width="2"/>
<text x="846" y="892" font-size="14" font-weight="bold" font-family="Liberation Serif" fill="#000" textLength="27" lengthAdjust="spacingAndGlyphs">hrs</text>
<rect x="879.500" y="877.500" width="24" height="24" fill="#e4e4e4" stroke="#f00"/>
<rect x="883" y="878" width="17" height="17" fill="url(#ckD)"/>
<path d="M887 886H897M891 882L887 886L891 890" stroke="#000" stroke-width="2" fill="none"/>
<rect x="905.500" y="877.500" width="24" height="24" fill="#000" stroke="#f00"/>
<rect x="909" y="878" width="17" height="17" fill="url(#ckD)"/>
<path d="M912 886H922M918 882L922 886L918 890" stroke="#000" stroke-width="2" fill="none"/>
<rect x="946.500" y="877.500" width="31" height="24" fill="#e4e4e4" stroke="#f00"/>
<text x="950" y="895" font-size="14" fill="#000" textLength="24" lengthAdjust="spacingAndGlyphs">Help</text>
<rect x="982.500" y="877.500" width="50" height="24" fill="#e4e4e4" stroke="#f00"/>
<text x="986" y="895" font-size="14" fill="#000" textLength="43" lengthAdjust="spacingAndGlyphs">Dismiss</text>

<!-- INFO PANEL -->
<rect x="574" y="770" width="506" height="107" fill="#000"/>
<rect x="575" y="777" width="45" height="23" fill="#000" stroke="#e0e0e0" stroke-width="2"/>
<text x="580" y="793" font-size="12" fill="#e8e8e8" textLength="35" lengthAdjust="spacingAndGlyphs">Dismiss</text>
<path d="M572 802H1073V870H572" fill="none" stroke="#e0e0e0" stroke-width="2"/>
<text class="m" x="573" y="818">PLATFORM</text><text class="m" x="673" y="818">FIELD</text><text class="m" x="771" y="818">ALTITUDE</text><text class="m" x="907" y="818">TIME</text>
<text class="m" x="573" y="833">rhb_lowprf</text><text class="m" x="672" y="833">maxdz</text><text class="m" x="771" y="833">0.50 km MSL</text><text class="m" x="907" y="833">11-Aug-97,8:00:31</text>
<text class="m" x="573" y="848">rhb_3d</text><text class="m" x="672" y="848">maxdz</text><text class="m" x="771" y="848">0.50 km MSL</text><text class="m" x="907" y="848">11-Aug-97,8:01:23</text>
<path d="M1045 775.500H1122M1080.500 775V877M574 876.500H1080" fill="none" stroke="#fff" stroke-dasharray="1 1"/>
</svg>
</body></html>
